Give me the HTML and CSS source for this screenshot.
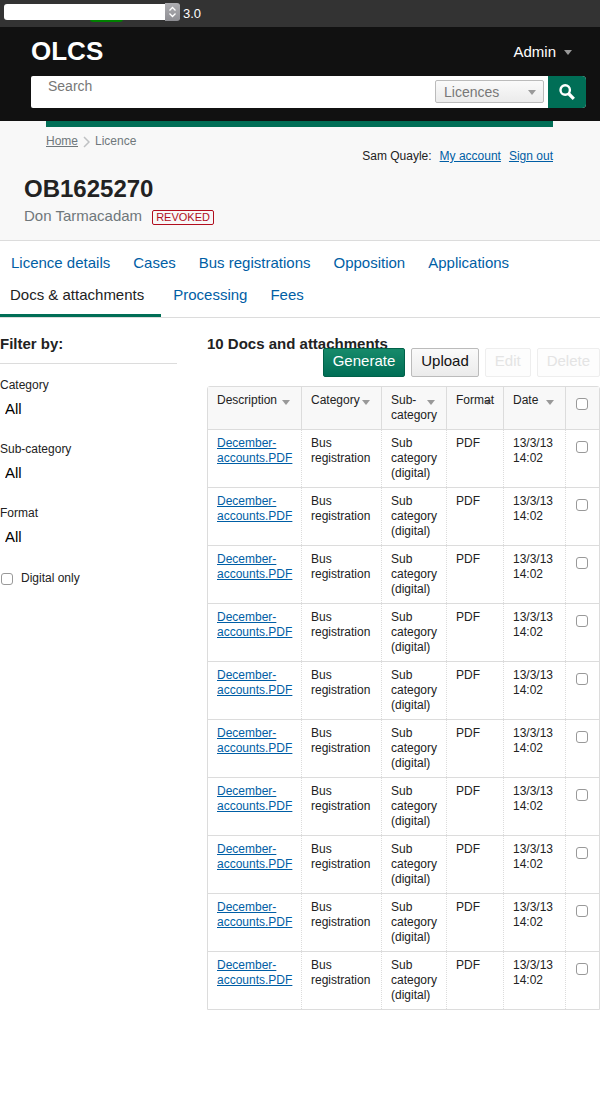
FILE: index.html
```html
<!DOCTYPE html>
<html lang="en">
<head>
<meta charset="utf-8">
<title>OLCS</title>
<meta name="viewport" content="width=device-width, initial-scale=1">
<link rel="stylesheet" href="styles.css">
</head>
<body>
<div class="toolbar">
  <span class="version-pick">
    <span class="version-flag"></span>
    <select class="version-select" aria-label="Version"><option></option></select>
    <svg class="version-arrows" viewBox="0 0 15 18" aria-hidden="true"><path d="M4.500 7.500 7.500 4.500l3 3M4.500 10.500l3 3 3-3" fill="none" stroke="#fff" stroke-width="1.300"/></svg>
  </span>
  <span>3.0</span>
</div>
<header class="header">
  <div class="header-top">
    <span class="logo">OLCS</span>
    <button class="admin" type="button">Admin <span class="arrow"></span></button>
  </div>
  <form class="search">
    <input class="search-input" type="text" placeholder="Search" aria-label="Search">
    <span class="search-type">
      <select aria-label="Search type"><option>Licences</option></select>
      <span class="arrow search-arrow"></span>
    </span>
    <button class="search-button" type="button" aria-label="Submit search">
      <svg class="search-icon" viewBox="0 0 16 16" aria-hidden="true"><circle cx="6.200" cy="6" r="4.700" fill="none" stroke="#fff" stroke-width="2.400"/><path d="M9.500 9.500 14.800 14.800" stroke="#fff" stroke-width="3.200"/></svg>
    </button>
  </form>
</header>
<section class="intro">
  <div class="intro-bar">
    <nav class="breadcrumb" aria-label="Breadcrumb">
      <a href="#">Home</a>
      <svg class="chevron" viewBox="0 0 7 12" aria-hidden="true"><path d="M1 1l5 5-5 5" fill="none" stroke="#bfc1c3" stroke-width="1.500"/></svg>
      <span>Licence</span>
    </nav>
    <div class="account"><span>Sam Quayle:</span><a href="#">My account</a><a href="#">Sign out</a></div>
  </div>
  <div class="identity">
    <h1 class="title">OB1625270</h1>
    <div class="subtitle"><span>Don Tarmacadam</span><span class="status">REVOKED</span></div>
  </div>
</section>
<nav class="tabs" aria-label="Licence">
  <a href="#">Licence details</a>
  <a href="#">Cases</a>
  <a href="#">Bus registrations</a>
  <a href="#">Opposition</a>
  <a href="#">Applications</a>
  <a href="#" class="active" aria-current="page">Docs &amp; attachments</a>
  <a href="#">Processing</a>
  <a href="#">Fees</a>
</nav>
<main class="main">
  <form class="filters">
    <h2 class="heading filter-heading">Filter by:</h2>
    <div class="field"><label for="category">Category</label><select id="category"><option>All</option></select></div>
    <div class="field"><label for="subcategory">Sub-category</label><select id="subcategory"><option>All</option></select></div>
    <div class="field"><label for="format">Format</label><select id="format"><option>All</option></select></div>
    <label class="check-row"><input class="check" type="checkbox"><span>Digital only</span></label>
  </form>
  <section class="documents">
    <h2 class="heading">10 Docs and attachments</h2>
    <div class="actions">
      <button class="button primary" type="button">Generate</button>
      <button class="button" type="button">Upload</button>
      <button class="button" type="button" disabled>Edit</button>
      <button class="button" type="button" disabled>Delete</button>
    </div>
    <table class="table">
      <colgroup><col><col class="col-category"><col class="col-sub"><col class="col-format"><col class="col-date"><col class="col-check"></colgroup>
      <thead>
        <tr>
          <th>Description<span class="arrow sort"></span></th>
          <th>Category<span class="arrow sort"></span></th>
          <th>Sub-category<span class="arrow sort"></span></th>
          <th>Format<span class="arrow sort"></span></th>
          <th>Date<span class="arrow sort"></span></th>
          <th><input class="check" type="checkbox" aria-label="Select all"></th>
        </tr>
      </thead>
      <tbody>
        <tr><td><a href="#">December-accounts.PDF</a></td><td>Bus registration</td><td>Sub category (digital)</td><td>PDF</td><td>13/3/13 14:02</td><td><input class="check" type="checkbox" aria-label="Select row 1"></td></tr>
        <tr><td><a href="#">December-accounts.PDF</a></td><td>Bus registration</td><td>Sub category (digital)</td><td>PDF</td><td>13/3/13 14:02</td><td><input class="check" type="checkbox" aria-label="Select row 2"></td></tr>
        <tr><td><a href="#">December-accounts.PDF</a></td><td>Bus registration</td><td>Sub category (digital)</td><td>PDF</td><td>13/3/13 14:02</td><td><input class="check" type="checkbox" aria-label="Select row 3"></td></tr>
        <tr><td><a href="#">December-accounts.PDF</a></td><td>Bus registration</td><td>Sub category (digital)</td><td>PDF</td><td>13/3/13 14:02</td><td><input class="check" type="checkbox" aria-label="Select row 4"></td></tr>
        <tr><td><a href="#">December-accounts.PDF</a></td><td>Bus registration</td><td>Sub category (digital)</td><td>PDF</td><td>13/3/13 14:02</td><td><input class="check" type="checkbox" aria-label="Select row 5"></td></tr>
        <tr><td><a href="#">December-accounts.PDF</a></td><td>Bus registration</td><td>Sub category (digital)</td><td>PDF</td><td>13/3/13 14:02</td><td><input class="check" type="checkbox" aria-label="Select row 6"></td></tr>
        <tr><td><a href="#">December-accounts.PDF</a></td><td>Bus registration</td><td>Sub category (digital)</td><td>PDF</td><td>13/3/13 14:02</td><td><input class="check" type="checkbox" aria-label="Select row 7"></td></tr>
        <tr><td><a href="#">December-accounts.PDF</a></td><td>Bus registration</td><td>Sub category (digital)</td><td>PDF</td><td>13/3/13 14:02</td><td><input class="check" type="checkbox" aria-label="Select row 8"></td></tr>
        <tr><td><a href="#">December-accounts.PDF</a></td><td>Bus registration</td><td>Sub category (digital)</td><td>PDF</td><td>13/3/13 14:02</td><td><input class="check" type="checkbox" aria-label="Select row 9"></td></tr>
        <tr><td><a href="#">December-accounts.PDF</a></td><td>Bus registration</td><td>Sub category (digital)</td><td>PDF</td><td>13/3/13 14:02</td><td><input class="check" type="checkbox" aria-label="Select row 10"></td></tr>
      </tbody>
    </table>
  </section>
</main>
</body>
</html>
```

FILE: styles.css
```css
* { box-sizing: border-box; }
body {
  margin: 0;
  background: #fff;
  color: #222;
  font: 12px/15px "Liberation Sans", Arial, sans-serif;
}
button, input, select { font-family: inherit; margin: 0; }
a { color: #005ea5; }

/* Version toolbar */
.toolbar {
  display: flex;
  align-items: center;
  gap: 3px;
  height: 27px;
  padding-left: 4px;
  background: #333;
  color: #fff;
  font-size: 13px;
}
.version-pick { position: relative; z-index: 0; width: 176px; height: 18px; margin-bottom: 3px; }
.version-select {
  display: block;
  width: 100%;
  height: 16px;
  margin-top: 1px;
  padding: 0;
  border: 0;
  border-radius: 3px;
  background: #fff;
  appearance: none;
}
.version-arrows {
  position: absolute;
  top: 0;
  right: 0;
  width: 15px;
  height: 18px;
  border-radius: 0 3px 3px 0;
  background: linear-gradient(#aeaeb2, #8e8e93);
  pointer-events: none;
}
.version-flag {
  position: absolute;
  z-index: -1;
  bottom: -1px;
  left: 86px;
  width: 33px;
  height: 6px;
  border-radius: 3px;
  background: #008000;
}

/* Header */
.header { padding: 9px 14px 13px 31px; background: #111; }
.header-top { display: flex; align-items: center; justify-content: space-between; height: 30px; margin-bottom: 10px; }
.logo { color: #fff; font-size: 26px; font-weight: bold; line-height: 30px; }
.admin {
  display: flex;
  align-items: center;
  gap: 8px;
  padding: 0 14px 0 0;
  border: 0;
  background: none;
  color: #fff;
  font-size: 15px;
}
.arrow { width: 0; height: 0; border: solid transparent; border-width: 5px 4px 0; border-top-color: #999; }
.admin .arrow { margin-top: 2px; }
.search { display: flex; height: 32px; border-radius: 2px 4px 4px 2px; background: #fff; overflow: hidden; }
.search-input {
  flex: 1;
  min-width: 0;
  padding: 0 17px 12px;
  border: 0;
  background: none;
  color: #222;
  font-size: 14px;
}
.search-input::placeholder { color: #777; opacity: 1; }
.search-type { position: relative; width: 109px; margin: 4px 4px 0 0; }
.search-type select {
  display: block;
  width: 100%;
  height: 23px;
  padding: 0 8px;
  border: 1px solid #bbb;
  border-radius: 2px;
  background: linear-gradient(#fafafa, #ebebeb);
  color: #777;
  font-size: 14px;
  appearance: none;
}
.search-arrow { position: absolute; top: 10px; right: 8px; pointer-events: none; }
.search-button { display: flex; align-items: center; justify-content: center; width: 38px; padding: 0; border: 0; background: #006e56; }
.search-icon { width: 16px; height: 16px; }

/* Licence summary */
.intro { padding-bottom: 14px; border-bottom: 1px solid #dcdcdc; background: #f8f8f8; }
.intro-bar { display: flex; justify-content: space-between; margin: 0 47px 0 46px; border-top: 6px solid #006e56; }
.breadcrumb { display: flex; align-items: center; gap: 5px; height: 15px; margin-top: 7px; color: #6f777b; }
.breadcrumb a { color: inherit; }
.chevron { width: 7px; height: 12px; margin-top: 1px; }
.account { display: flex; gap: 8px; margin-top: 22px; }
.identity { padding: 11px 24px 0; }
.title { margin: 0; font-size: 24px; line-height: 28px; }
.subtitle { display: flex; align-items: center; gap: 10px; margin-top: 3px; color: #6f777b; font-size: 15px; line-height: 20px; }
.status { margin-top: 2px; padding: 0 3px; border: 1px solid #b10e1e; border-radius: 2px; color: #b10e1e; font-size: 11px; line-height: 13px; }

/* Tabs */
.tabs { display: flex; flex-wrap: wrap; align-items: flex-start; column-gap: 1px; padding-top: 6px; border-bottom: 1px solid #dcdcdc; }
.tabs a { padding: 0 11px; font-size: 15px; line-height: 32px; text-decoration: none; }
.tabs .active { padding: 0 17px 3px 10px; border-bottom: 3px solid #006e56; color: #222; }

/* Page body */
.main { display: flex; gap: 30px; padding-top: 16px; }
.heading { margin: 0; font-size: 15px; line-height: 20px; }
.filters { flex: 0 0 177px; }
.filter-heading { margin-bottom: 13px; padding-bottom: 9px; border-bottom: 1px solid #dcdcdc; }
.field { display: flex; flex-direction: column; gap: 3px; height: 64px; padding-top: 1px; }
.field select { height: 24px; padding: 0 5px; border: 0; background: none; color: #000; font-size: 15px; appearance: none; }
.check-row { display: flex; align-items: center; gap: 8px; margin-top: 2px; padding-left: 1px; }
.check {
  display: block;
  width: 12px;
  height: 12px;
  border: 1px solid #999;
  border-radius: 3px;
  background: #fff;
  appearance: none;
}
.documents { flex: 1; min-width: 0; }
.actions { position: relative; display: flex; justify-content: flex-end; gap: 6px; margin: -6px 0 9px; }
.button {
  padding: 3px 9px 6px;
  border: 1px solid #bbb;
  border-radius: 2px;
  background: linear-gradient(#fafafa, #ebebeb);
  color: #111;
  font-size: 15px;
  line-height: 18px;
}
.button.primary { border-color: #006149; background: linear-gradient(#178a6a, #006e56); color: #fff; }
.button:disabled { border-color: #eee; background: #fdfdfd; color: #e4e4e4; }

/* Documents table */
.table { width: 100%; border: 1px solid #dcdcdc; border-radius: 3px 3px 0 0; border-spacing: 0; table-layout: fixed; }
.col-category { width: 80px; }
.col-sub { width: 65px; }
.col-format { width: 57px; }
.col-date { width: 62px; }
.col-check { width: 34px; }
.table th, .table td { padding: 6px 9px; text-align: left; vertical-align: top; }
.table th { position: relative; z-index: 0; background: #f8f8f8; font-weight: normal; }
.table th + th { border-left: 1px solid #dcdcdc; }
.table td { border-top: 1px solid #dcdcdc; }
.table td + td { border-left: 1px dotted #dcdcdc; }
.table .check { margin-top: 5px; margin-left: 1px; }
.sort { position: absolute; z-index: -1; top: 13px; right: 11px; }
```
